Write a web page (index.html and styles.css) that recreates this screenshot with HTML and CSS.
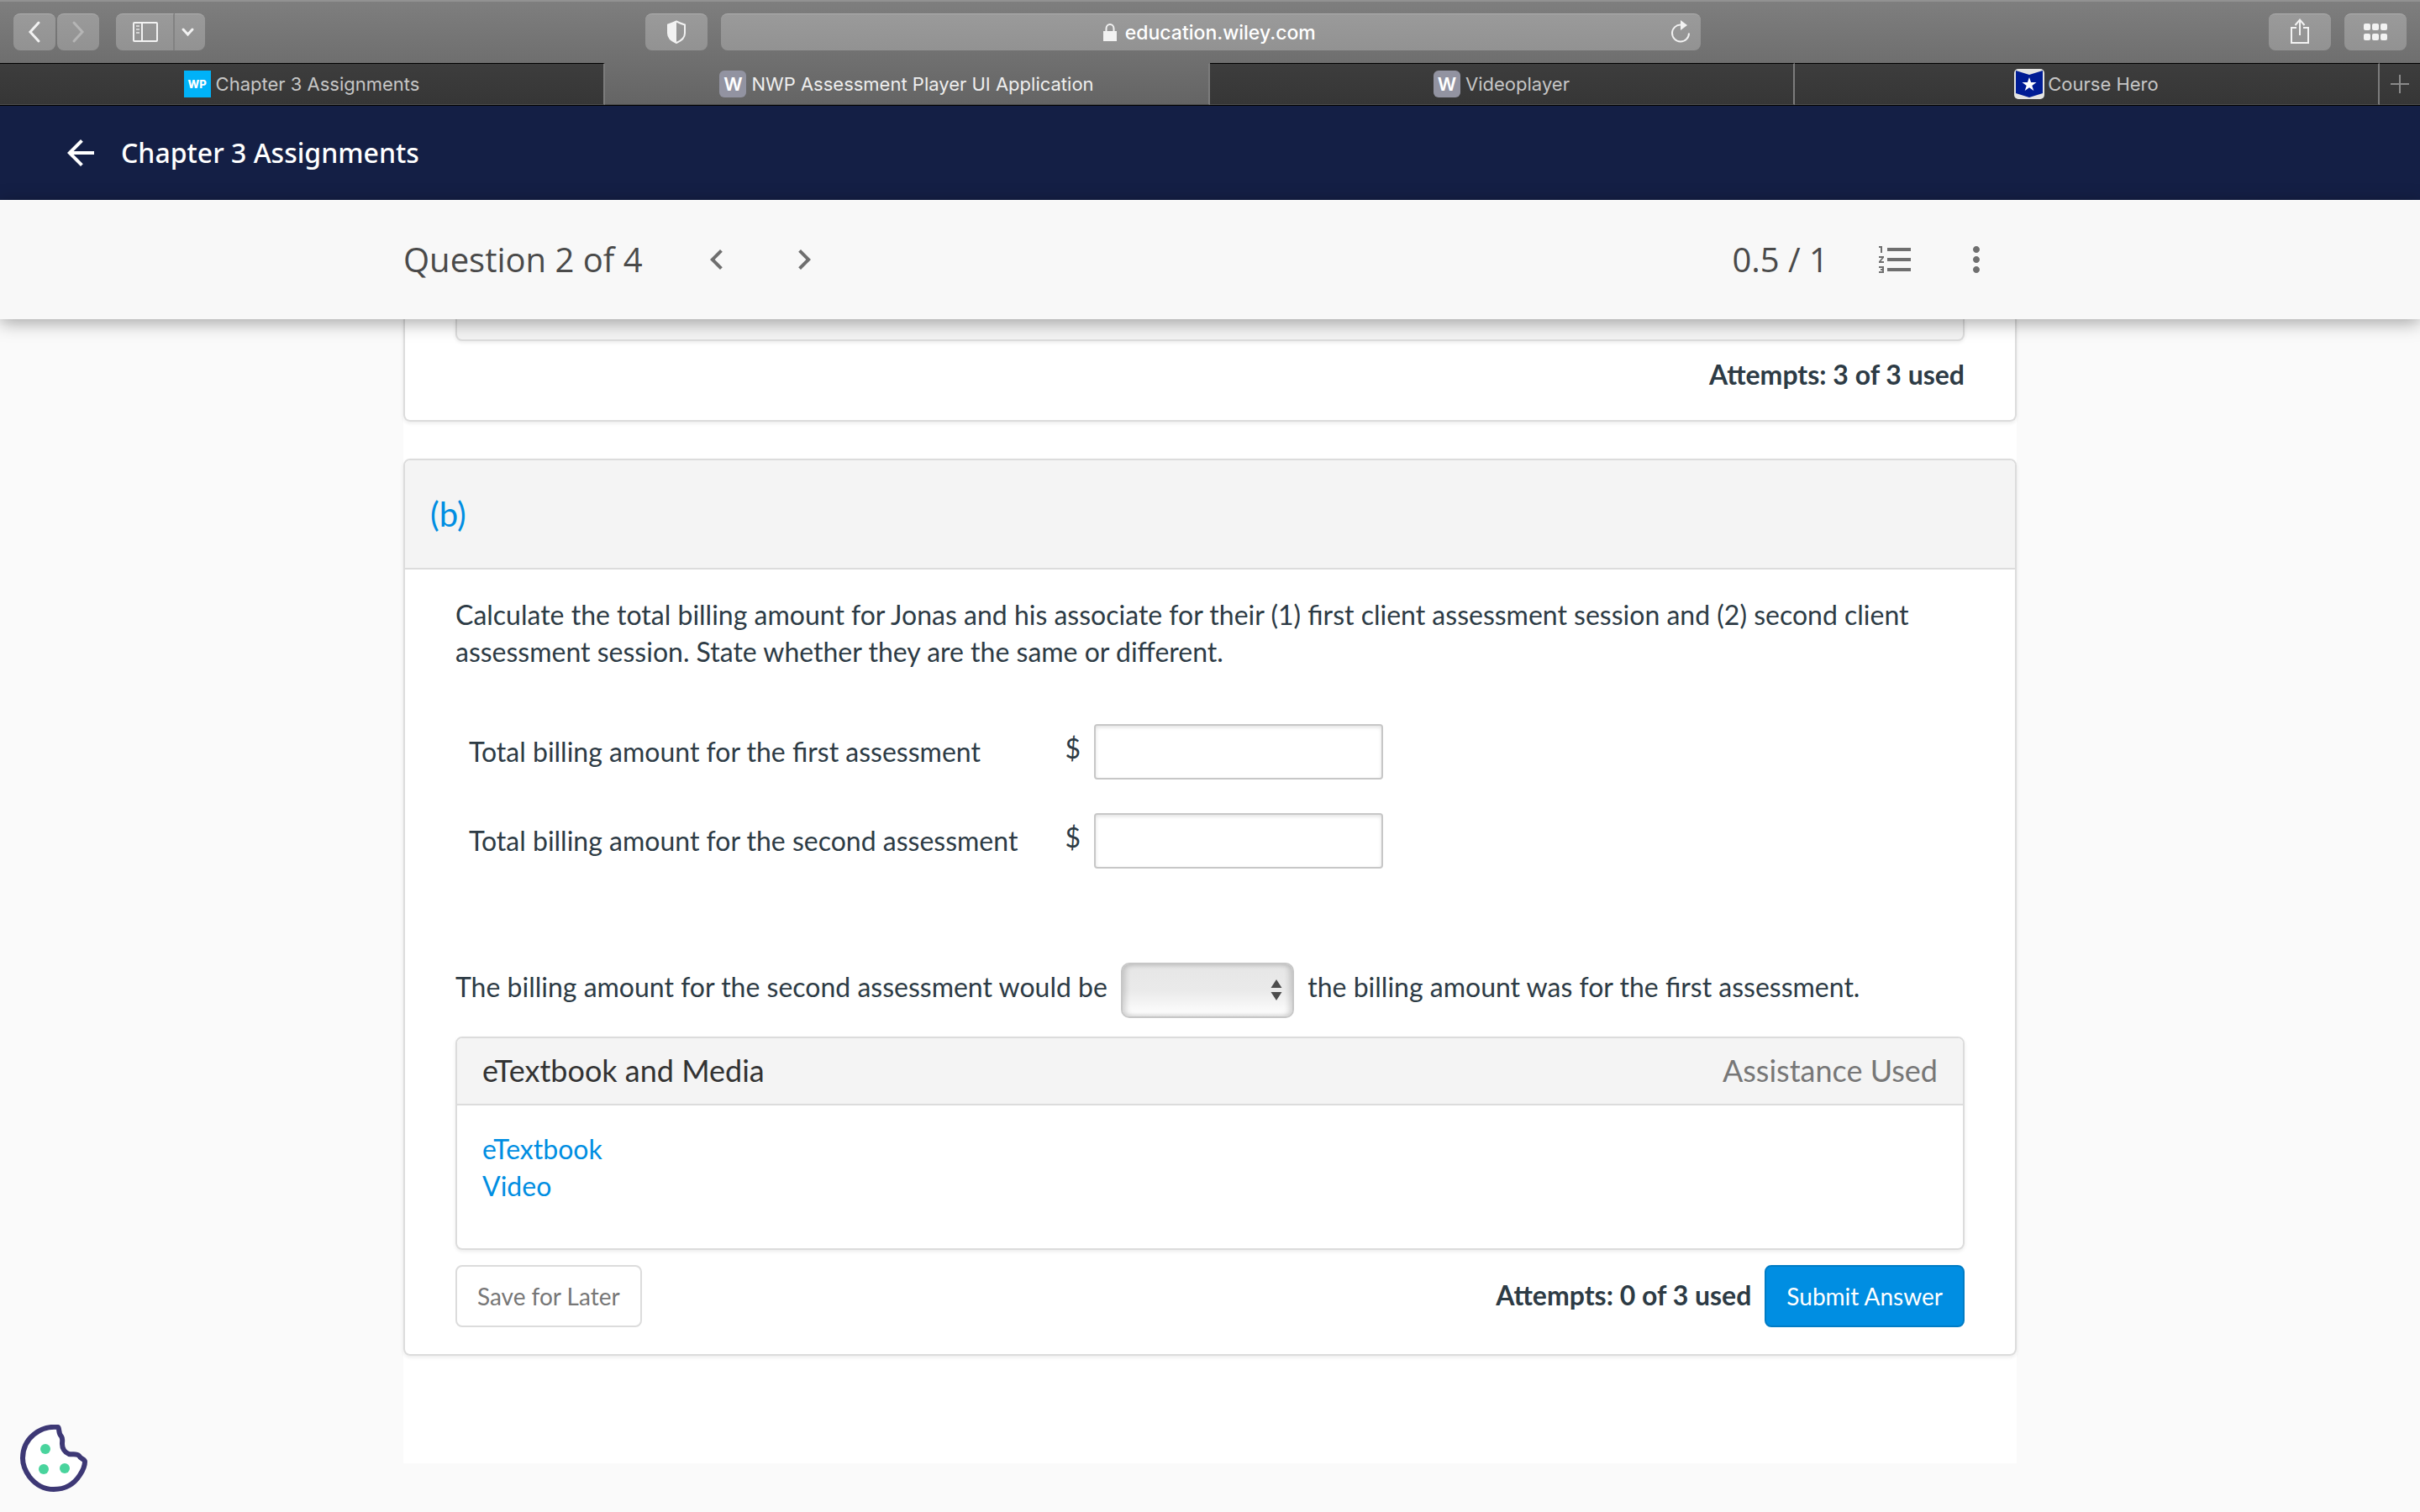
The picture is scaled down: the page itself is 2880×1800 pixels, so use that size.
FILE: index.html
```html
<!DOCTYPE html>
<html lang="en">

<head>
    <meta charset="UTF-8">
    <meta name="viewport" content="width=device-width, initial-scale=1.0">
    <title>NWP Assessment Player UI Application</title>
    <link rel="stylesheet" href="styles.css">
</head>

<body>
    <!-- browser -->
    <div class="browser">
        <div class="toolbar">
            <div class="toolbar__left">
                <div class="history">
                    <button class="tool" aria-label="Back">
                        <svg width="50" height="44" viewBox="0 0 50 44"><path d="M30 11 20 22l10 11" fill="none" stroke="#f2f2f2" stroke-width="3" stroke-linecap="round"/></svg>
                    </button>
                    <button class="tool" aria-label="Forward">
                        <svg width="50" height="44" viewBox="0 0 50 44"><path d="m20 11 10 11-10 11" fill="none" stroke="#b5b5b5" stroke-width="3" stroke-linecap="round"/></svg>
                    </button>
                </div>
                <div class="sidebar">
                    <button class="tool tool--side" aria-label="Sidebar">
                        <svg width="68" height="44" viewBox="0 0 68 44"><rect x="21" y="11" width="28" height="22" rx="1" fill="none" stroke="#f2f2f2" stroke-width="2"/><path d="M31 11v22" stroke="#f2f2f2" stroke-width="2"/><path d="M24 15h4m-4 4h4m-4 4h4" stroke="#d2d2d2" stroke-width="2"/></svg>
                    </button>
                    <button class="tool tool--menu" aria-label="Sidebar menu">
                        <svg width="36" height="44" viewBox="0 0 36 44"><path d="m10 19 5.500 6 5.500-6" fill="none" stroke="#f2f2f2" stroke-width="3" stroke-linecap="round"/></svg>
                    </button>
                </div>
            </div>
            <div class="toolbar__center">
                <button class="tool tool--wide" aria-label="Privacy report">
                    <svg width="74" height="44" viewBox="0 0 74 44"><path d="M37 9.500c4 2 7 3 10 4v10c0 5-4 9-10 11.500-6-2.500-10-6.500-10-11.500v-10c3-1 6-2 10-4z" fill="none" stroke="#f2f2f2" stroke-width="2"/><path d="M37 9v26c-6-3-10-6.500-10-12V13.500c3-1 6-2 10-4.500z" fill="#f2f2f2"/></svg>
                </button>
                <form class="address">
                    <svg width="16" height="22" viewBox="0 0 16 22"><path d="M3.500 10V6a4.500 5 0 0 1 9 0v4" fill="none" stroke="#f2f2f2" stroke-width="2"/><path d="M0 9h16v12H0z" fill="#f2f2f2"/></svg>
                    <input class="address__input" type="text" value="education.wiley.com" aria-label="Address">
                    <button class="reload" type="button" aria-label="Reload">
                        <svg width="24" height="30" viewBox="0 0 24 30"><path d="M12.500 6.500A10 10 0 1 0 22 16.500" fill="none" stroke="#f2f2f2" stroke-width="2"/><path d="m12 1 8 6-8 6z" fill="#f2f2f2"/></svg>
                    </button>
                </form>
            </div>
            <div class="toolbar__right">
                <button class="tool tool--wide" aria-label="Share">
                    <svg width="74" height="44" viewBox="0 0 74 44"><path d="M33 17h-6v18h20V17h-6M37 26V8m-5.500 6L37 7.500l5.500 6.500" fill="none" stroke="#f2f2f2" stroke-width="2"/></svg>
                </button>
                <button class="tool tool--wide" aria-label="Tab overview">
                    <svg width="74" height="44" viewBox="0 0 74 44" fill="#f2f2f2"><rect x="23" y="12" width="8" height="8" rx="2"/><rect x="33" y="12" width="8" height="8" rx="2"/><rect x="43" y="12" width="8" height="8" rx="2"/><rect x="23" y="24" width="8" height="8" rx="2"/><rect x="33" y="24" width="8" height="8" rx="2"/><rect x="43" y="24" width="8" height="8" rx="2"/></svg>
                </button>
            </div>
        </div>
        <div class="tabs">
            <a class="tab" href="#"><span class="favicon favicon--wp">WP</span>Chapter 3 Assignments</a>
            <a class="tab active" href="#"><span class="favicon">W</span>NWP Assessment Player UI Application</a>
            <a class="tab" href="#"><span class="favicon">W</span>Videoplayer</a>
            <a class="tab tab--hero" href="#">
                <svg width="36" height="36" viewBox="0 0 36 36"><rect width="36" height="36" rx="5" fill="#e4e4e2"/><path d="m2 2 16 5 16-5v27l-16 5-16-5z" fill="#001c94"/><path d="m18 10 2.100 6.100h6.400l-5.200 3.800 2 6.200-5.300-3.800-5.300 3.800 2-6.200-5.200-3.800h6.400z" fill="#fff"/></svg>
                Course Hero
            </a>
            <button class="tab tab--new" aria-label="New tab">
                <svg width="24" height="24" viewBox="0 0 24 24"><path d="M12 1v22M1 12h22" stroke="#8a8a8a" stroke-width="2"/></svg>
            </button>
        </div>
    </div>

    <!-- header -->
    <header class="header">
        <a class="header__back" href="#" aria-label="Back to assignments">
            <svg width="48" height="48" viewBox="0 0 24 24"><path d="M20 11H7.830l5.590-5.590L12 4l-8 8 8 8 1.410-1.410L7.830 13H20v-2z" fill="#fff"/></svg>
        </a>
        <h1 class="header__title">Chapter 3 Assignments</h1>
    </header>

    <!-- question bar -->
    <div class="question">
        <div class="question__inner">
            <h2 class="question__title">Question 2 of 4</h2>
            <div class="question__nav">
                <button class="icon" aria-label="Previous question">
                    <svg width="48" height="48" viewBox="0 0 24 24"><path d="M15.410 7.410 14 6l-6 6 6 6 1.410-1.410L10.830 12z"/></svg>
                </button>
                <button class="icon" aria-label="Next question">
                    <svg width="48" height="48" viewBox="0 0 24 24"><path d="M10 6 8.590 7.410 13.170 12l-4.580 4.590L10 18l6-6z"/></svg>
                </button>
            </div>
            <div class="question__score">0.5 / 1</div>
            <button class="icon" aria-label="Question list">
                <svg width="48" height="48" viewBox="0 0 24 24"><path d="M2 17h2v.5H3v1h1v.5H2v1h3v-4H2v1zm1-9h1V4H2v1h1v3zm-1 3h1.800L2 13.100v.9h3v-1H3.200L5 10.900V10H2v1zm5-6v2h14V5H7zm0 14h14v-2H7v2zm0-6h14v-2H7v2z"/></svg>
            </button>
            <button class="icon" aria-label="More options">
                <svg width="48" height="48" viewBox="0 0 24 24"><path d="M12 8c1.100 0 2-.9 2-2s-.9-2-2-2-2 .9-2 2 .9 2 2 2zm0 2c-1.100 0-2 .9-2 2s.9 2 2 2 2-.9 2-2-.9-2-2-2zm0 6c-1.100 0-2 .9-2 2s.9 2 2 2 2-.9 2-2-.9-2-2-2z"/></svg>
            </button>
        </div>
    </div>

    <!-- contents -->
    <main class="contents">
        <section class="card card--prev">
            <div class="box box--prev"></div>
            <p class="attempts">Attempts: 3 of 3 used</p>
        </section>

        <section class="card">
            <h3 class="card__title">(b)</h3>
            <div class="card__body">
                <p>Calculate the total billing amount for Jonas and his associate for their (1) first client assessment session and (2) second client assessment session. State whether they are the same or different.</p>
                <table class="billing">
                    <tr>
                        <td><label for="first">Total billing amount for the first assessment</label></td>
                        <td>$ <input class="amount" id="first" type="text"></td>
                    </tr>
                    <tr>
                        <td><label for="second">Total billing amount for the second assessment</label></td>
                        <td>$ <input class="amount" id="second" type="text"></td>
                    </tr>
                </table>
                <p class="compare">
                    <label for="compare">The billing amount for the second assessment would be</label>
                    <span class="select">
                        <select id="compare">
                            <option></option>
                        </select>
                        <svg class="select__arrow" width="14" height="26" viewBox="0 0 14 26"><path d="m7 0 6.500 10H.5zM7 25l6.500-10H.5z" fill="#4d4d4d"/></svg>
                    </span>
                    the billing amount was for the first assessment.
                </p>
                <div class="box">
                    <div class="box__title">
                        <h4>eTextbook and Media</h4>
                        <span>Assistance Used</span>
                    </div>
                    <ul class="box__list">
                        <li><a href="#">eTextbook</a></li>
                        <li><a href="#">Video</a></li>
                    </ul>
                </div>
                <div class="buttons">
                    <button class="save">Save for Later</button>
                    <p class="attempts">Attempts: 0 of 3 used</p>
                    <button class="submit">Submit Answer</button>
                </div>
            </div>
        </section>
    </main>

    <!-- cookie button -->
    <button class="cookie" aria-label="Cookie settings">
        <svg width="80" height="80" viewBox="0 0 80 80">
            <path d="M45 3C24 1 3 16 3 40c0 9 3 15 8 22 7 9 17 15 29 15 13 0 24-6 31-17 4-6 6-11 6-16 0-3-5-3-7-7-3-3-8-1-12-2-5-2-8-7-8-12 0-4 1-6-1-9-4-4-2-10-4-11z" fill="#fff" stroke="#3d3875" stroke-width="6" stroke-linejoin="round"/>
            <g fill="#49d49d"><circle cx="30" cy="29" r="6"/><circle cx="28" cy="53" r="6"/><circle cx="53" cy="52" r="6"/></g>
        </svg>
    </button>
</body>

</html>
```
FILE: styles.css
```css
* {
    margin: 0;
    padding: 0;
    box-sizing: border-box;
}

body {
    background-color: #fafafa;
    color: #2d3b45;
    font-family: Lato, sans-serif;
    font-size: 32px;
    line-height: 44px;
}

li {
    list-style: none;
}

a {
    color: #008ee2;
    text-decoration: none;
}

button {
    border: 0;
    background: none;
    font-family: inherit;
}

svg {
    display: block;
    flex: none;
}

/* browser */
.browser {
    border-top: 2px solid #929292;
    border-bottom: 1px solid #000;
    background: linear-gradient(#7e7e7e, #646464);
    font-family: Inter, "Liberation Sans", sans-serif;
    font-size: 22px;
    line-height: 32px;
}

.toolbar {
    display: grid;
    grid-template-columns: 17fr 1256px 19fr;
    padding: 14px 16px 15px;
}

.toolbar__left,
.toolbar__center,
.toolbar__right,
.history,
.sidebar {
    display: flex;
}

.toolbar__left {
    gap: 20px;
}

.toolbar__center {
    gap: 16px;
}

.toolbar__right {
    justify-content: flex-end;
    gap: 16px;
}

.history {
    gap: 2px;
}

.tool {
    width: 50px;
    height: 44px;
    border-top: 1px solid #adadad;
    border-radius: 8px;
    background: linear-gradient(#9a9a9a, #929292);
}

.tool svg {
    margin-top: -1px;
}

.tool--wide {
    width: 74px;
}

.tool--side {
    width: 70px;
    border-right: 2px solid #828282;
    border-radius: 8px 0 0 8px;
}

.tool--menu {
    width: 36px;
    border-radius: 0 8px 8px 0;
}

.address {
    position: relative;
    display: flex;
    flex: 1;
    align-items: center;
    justify-content: center;
    gap: 10px;
    height: 44px;
    border-top: 1px solid #adadad;
    border-radius: 8px;
    background: linear-gradient(#9a9a9a, #929292);
}

.address__input {
    width: 230px;
    border: 0;
    background: none;
    color: #fff;
    font: inherit;
    font-size: 23px;
    font-weight: 500;
}

.reload {
    position: absolute;
    right: 12px;
    top: 6px;
}

.tabs {
    display: grid;
    grid-template-columns: 25% 25% 1fr 1fr 48px;
}

.tab {
    display: flex;
    align-items: center;
    justify-content: center;
    gap: 6px;
    height: 50px;
    border-top: 1px solid #000;
    border-right: 2px solid #7c7c7c;
    border-bottom: 1px solid #4c4c4c;
    background: linear-gradient(#3d3d3d, #363636);
    color: #c6c6c6;
}

.tab.active {
    border-top-color: transparent;
    background: none;
    color: #eee;
}

.tab--hero {
    gap: 4px;
}

.tab--new {
    border-right: 0;
}

.favicon {
    width: 32px;
    border-radius: 6px;
    background-color: #9293a1;
    color: #fff;
    font-weight: 600;
    text-align: center;
}

.favicon--wp {
    border-radius: 0;
    background-color: #00b2f8;
    font-size: 13px;
    font-weight: 800;
}

/* header */
.header {
    display: flex;
    align-items: center;
    gap: 24px;
    height: 112px;
    padding: 0 72px;
    background-color: #141f45;
    color: #fff;
    font-family: "Noto Sans", sans-serif;
}

.header__title {
    font-size: 32px;
    font-weight: 500;
}

/* question bar */
.question {
    position: relative;
    z-index: 1;
    background-color: #f8f8f8;
    box-shadow: 0 4px 20px rgba(0, 0, 0, 0.36);
    color: #4a4a4a;
    font-family: "Open Sans", sans-serif;
    font-size: 40px;
}

.question__inner {
    display: flex;
    align-items: center;
    max-width: 1920px;
    height: 142px;
    margin: 0 auto;
}

.question__title {
    font-size: 40px;
    font-weight: 400;
}

.question__nav {
    display: flex;
    gap: 8px;
    margin-left: 40px;
}

.question__score {
    margin-left: auto;
    padding-right: 32px;
}

.icon {
    width: 96px;
    padding: 24px;
}

.icon svg {
    fill: #6f6f6f;
}

/* contents */
.contents {
    max-width: 1920px;
    margin: 0 auto;
    padding-bottom: 128px;
    background-color: #fff;
}

.card {
    border: 2px solid #dcdcdc;
    border-radius: 8px;
    box-shadow: 0 2px 4px rgba(0, 0, 0, 0.08);
}

.card--prev {
    margin-bottom: 44px;
    padding: 0 60px 32px;
    border-top: 0;
    border-radius: 0 0 8px 8px;
}

.card--prev .attempts {
    margin-top: 18px;
    text-align: right;
}

.attempts {
    font-weight: 700;
}

.card__title {
    padding: 42px 30px;
    border-bottom: 2px solid #dcdcdc;
    background-color: #f4f4f4;
    border-radius: 6px 6px 0 0;
    color: #008ee2;
    font-size: 40px;
    font-weight: 400;
}

.card__body {
    padding: 32px 60px;
}

.billing {
    margin: 44px 0 92px;
    border-spacing: 0;
}

.billing td {
    height: 106px;
    padding: 0 40px 0 16px;
}

.amount,
.select {
    margin-left: 8px;
    vertical-align: middle;
}

.amount {
    width: 344px;
    height: 66px;
    border: 2px solid #c7c7c7;
    border-radius: 4px;
    box-shadow: inset 0 2px 4px rgba(0, 0, 0, 0.12);
    background-color: #fff;
    font: inherit;
}

.select {
    position: relative;
    display: inline-block;
    margin-right: 8px;
}

.select select {
    display: block;
    width: 206px;
    height: 66px;
    border: 2px solid #c7c7c7;
    border-radius: 10px;
    box-shadow: inset 4px 0 6px rgba(0, 0, 0, 0.14), inset -4px 0 6px rgba(0, 0, 0, 0.14);
    background: linear-gradient(#e6e6e6, #eaeaea 50%, #fff);
    font: inherit;
    appearance: none;
}

.select__arrow {
    position: absolute;
    right: 14px;
    top: 20px;
    pointer-events: none;
}

.box {
    border: 2px solid #dcdcdc;
    border-radius: 8px;
    box-shadow: 0 2px 4px rgba(0, 0, 0, 0.08);
}

.box--prev {
    height: 26px;
    border-top: 0;
    border-radius: 0 0 8px 8px;
    background-color: #f4f4f4;
}

.compare {
    margin-bottom: 22px;
}

.box__title {
    display: flex;
    justify-content: space-between;
    padding: 16px 30px 18px;
    border-bottom: 2px solid #dcdcdc;
    border-radius: 6px 6px 0 0;
    background-color: #f4f4f4;
    color: #777;
    font-size: 36px;
}

.box__title h4 {
    color: #333;
    font-size: 36px;
    font-weight: 400;
}

.box__list {
    padding: 30px 30px 52px;
}

.buttons {
    display: flex;
    align-items: baseline;
    gap: 16px;
    margin-top: 18px;
}

.buttons .attempts {
    margin-left: auto;
}

.save,
.submit {
    height: 74px;
    padding: 0 24px;
    border: 2px solid #dcdcdc;
    border-radius: 8px;
    color: #777;
    font-size: 28px;
}

.submit {
    border-color: #007cc5;
    background-color: #008ee2;
    color: #fff;
}

/* cookie button */
.cookie {
    position: fixed;
    left: 24px;
    bottom: 24px;
}
```
